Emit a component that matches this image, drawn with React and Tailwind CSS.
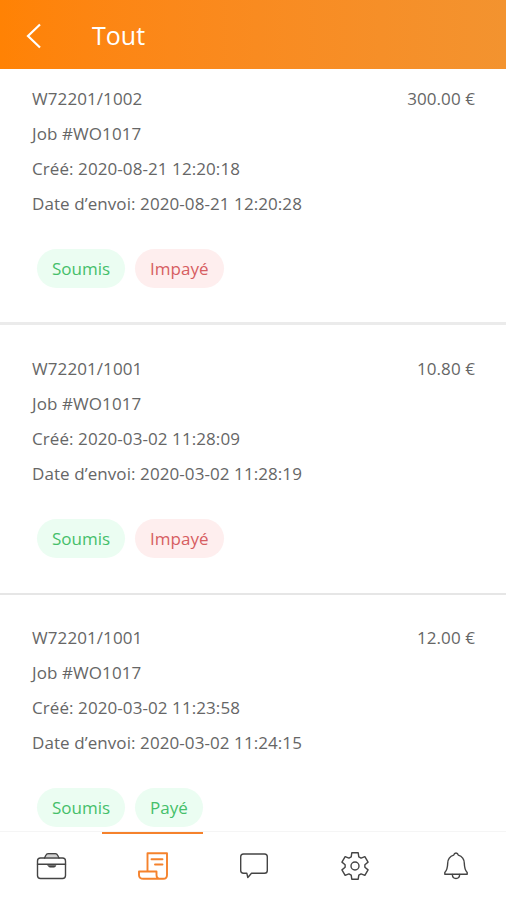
import { useState } from "react";
import clsx from "clsx";

const INVOICES = [
  {
    number: "W72201/1002",
    amount: "300.00 €",
    job: "WO1017",
    created: "2020-08-21 12:20:18",
    sent: "2020-08-21 12:20:28",
    paid: false,
  },
  {
    number: "W72201/1001",
    amount: "10.80 €",
    job: "WO1017",
    created: "2020-03-02 11:28:09",
    sent: "2020-03-02 11:28:19",
    paid: false,
  },
  {
    number: "W72201/1001",
    amount: "12.00 €",
    job: "WO1017",
    created: "2020-03-02 11:23:58",
    sent: "2020-03-02 11:24:15",
    paid: true,
  },
];

const Icon = ({ children }) => (
  <svg
    className="w-8 h-8"
    viewBox="0 0 32 32"
    fill="none"
    stroke="currentColor"
    strokeWidth="1.4"
    strokeLinecap="round"
    strokeLinejoin="round"
  >
    {children}
  </svg>
);

const BriefcaseIcon = () => (
  <Icon>
    <rect x="1.5" y="8" width="28" height="20.5" rx="3" />
    <path d="M8.500 8 10 5q.6-1.300 2-1.300h7.500q1.400 0 2 1.300l1.500 3" />
    <path d="M10.500 6h10.500" strokeWidth=".8" opacity=".6" />
    <path d="M1.500 14.300h28" />
    <path d="M12 15.500h8q-.5 1.800-2 1.800h-4q-1.500 0-2-1.800Z" fill="currentColor" strokeWidth=".5" />
  </Icon>
);

const InvoiceIcon = () => (
  <Icon>
    <path d="M10.500 21V3.300H30V25q0 3.800-3.800 3.800H6.500q-4.500 0-4.500-3.800v-3.500h17.500V25q0 3.800 4 3.800" strokeWidth="1.900" />
    <path d="M14.500 9.300h11M18 14.500h7.500" strokeWidth="1.900" />
  </Icon>
);

const ChatIcon = () => (
  <Icon>
    <path d="M5.500 4h21q2.800 0 2.800 2.800v13.600q0 2.800-2.800 2.800H13.500l-3.700 4.300-1-4.300H5.500q-2.800 0-2.800-2.800V6.800q0-2.800 2.800-2.800Z" />
  </Icon>
);

const GearIcon = () => (
  <Icon>
    <g transform="translate(16 16)">
      <path d="M-3.800-9.200-3.200-13.200H3.200L3.800-9.200 6.070-7.890 9.860-9.370 13.060-3.830 9.870-1.310V1.310L13.060 3.830 9.860 9.370 6.070 7.890 3.800 9.200 3.200 13.200H-3.200L-3.800 9.200-6.070 7.890-9.860 9.370-13.060 3.830-9.870 1.310V-1.310L-13.060-3.830-9.860-9.370-6.070-7.890Z" />
      <circle r="4" />
    </g>
  </Icon>
);

const BellIcon = () => (
  <Icon>
    <path d="M13.700 5.200q.5-2.200 2.300-2.200t2.300 2.200c4.200 1.300 5.900 4.300 6 8.100.1 4.300.4 6.700 2.900 9.200v1.700H4.800v-1.700c2.500-2.500 2.800-4.900 2.900-9.200.1-3.800 1.800-6.800 6-8.100Z" />
    <path d="M12.300 24.500q.3 4 3.700 4t3.700-4" />
  </Icon>
);

const TABS = [
  { id: "jobs", label: "Jobs", icon: BriefcaseIcon },
  { id: "invoices", label: "Factures", icon: InvoiceIcon },
  { id: "messages", label: "Messages", icon: ChatIcon },
  { id: "settings", label: "Paramètres", icon: GearIcon },
  { id: "alerts", label: "Notifications", icon: BellIcon },
];

const Badge = ({ tone, children }) => (
  <span
    className={clsx(
      "flex h-[39px] items-center rounded-full px-[15px] tracking-normal",
      tone === "green" ? "bg-[#ebfdf2] text-[#45bf6a]" : "bg-[#feeeee] text-[#d65d61]"
    )}
  >
    {children}
  </span>
);

const InvoiceItem = ({ invoice }) => (
  <li className="h-[270px] shrink-0 border-b-2 border-[#e6e6e6] pt-[26px] pr-[31px] pl-8 first:h-[256px] first:border-b-[3px] first:border-[#ebebeb] first:pt-3 last:pt-[25px]">
    <div className="flex justify-between">
      <span>{invoice.number}</span>
      <span>{invoice.amount}</span>
    </div>
    <p>Job #{invoice.job}</p>
    <p>Créé: {invoice.created}</p>
    <p>Date d’envoi: {invoice.sent}</p>
    <div className="mt-7 ml-[5px] flex gap-[10px]">
      <Badge tone="green">Soumis</Badge>
      <Badge tone={invoice.paid ? "green" : "red"}>{invoice.paid ? "Payé" : "Impayé"}</Badge>
    </div>
  </li>
);

const App = () => {
  const [activeTab, setActiveTab] = useState("invoices");

  return (
    <div className="flex h-screen flex-col overflow-hidden bg-white font-['Open_Sans',sans-serif] text-[#666]">
      {/* Header */}
      <header className="flex h-[69px] shrink-0 items-center bg-linear-to-r from-[#ff8204] to-[#f3932f] pt-[2px] pl-[26px] text-white">
        <button aria-label="Retour">
          <svg className="h-7 w-4" viewBox="0 0 16 28" fill="none" stroke="currentColor" strokeWidth="2.2">
            <path d="M14 2.500 2 14l12 11.500" />
          </svg>
        </button>
        <h1 className="ml-[50px] text-[25px]">Tout</h1>
      </header>

      {/* Invoices */}
      <ul className="flex min-h-0 flex-1 flex-col overflow-hidden text-[17px] leading-[35px] tracking-[0.08px]">
        {INVOICES.map((invoice, i) => (
          <InvoiceItem key={i} invoice={invoice} />
        ))}
      </ul>

      {/* Bottom tabs */}
      <nav className="grid h-[69px] shrink-0 grid-cols-5 border-t border-[#f5f5f5] pl-px">
        {TABS.map(({ id, label, icon: TabIcon }) => (
          <button
            key={id}
            aria-label={label}
            onClick={() => setActiveTab(id)}
            className={clsx(
              "flex items-center justify-center border-t-2 pb-[2px]",
              activeTab === id ? "border-[#f5822c] text-[#f5822c]" : "border-transparent text-[#444]"
            )}
          >
            <TabIcon />
          </button>
        ))}
      </nav>
    </div>
  );
};

export default App;
